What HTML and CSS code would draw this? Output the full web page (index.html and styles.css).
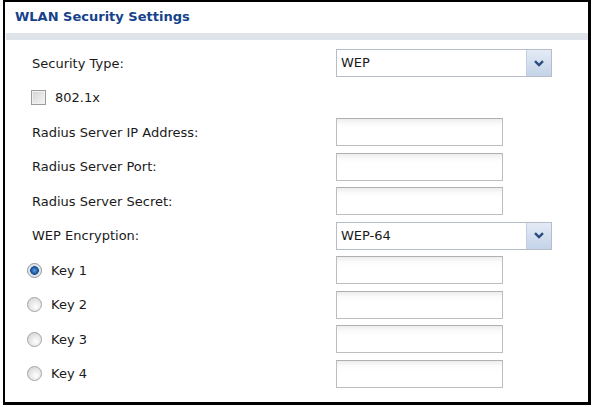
FILE: index.html
```html
<!DOCTYPE html>
<html>
<head>
<meta charset="utf-8">
<link rel="stylesheet" href="styles.css">
</head>
<body>
<div class="panel">
  <div class="panel-title">WLAN Security Settings</div>
  <div class="panel-bar"></div>
  <div class="form">
    <div class="row">
      <div class="label">Security Type:</div>
      <div class="select"><span class="select-text">WEP</span><span class="select-btn"><svg width="10" height="7" viewBox="0 0 10 7"><path d="M1 1.2 L5 5 L9 1.2" fill="none" stroke="#2a4b80" stroke-width="2.4"/></svg></span></div>
    </div>
    <div class="row">
      <span class="checkbox"></span><span class="opt-label">802.1x</span>
    </div>
    <div class="row">
      <div class="label">Radius Server IP Address:</div>
      <div class="field"></div>
    </div>
    <div class="row">
      <div class="label">Radius Server Port:</div>
      <div class="field"></div>
    </div>
    <div class="row">
      <div class="label">Radius Server Secret:</div>
      <div class="field"></div>
    </div>
    <div class="row">
      <div class="label">WEP Encryption:</div>
      <div class="select"><span class="select-text">WEP-64</span><span class="select-btn"><svg width="10" height="7" viewBox="0 0 10 7"><path d="M1 1.2 L5 5 L9 1.2" fill="none" stroke="#2a4b80" stroke-width="2.4"/></svg></span></div>
    </div>
    <div class="row">
      <div class="label radio-label"><span class="radio checked"></span><span class="opt-label">Key 1</span></div>
      <div class="field"></div>
    </div>
    <div class="row">
      <div class="label radio-label"><span class="radio"></span><span class="opt-label">Key 2</span></div>
      <div class="field"></div>
    </div>
    <div class="row">
      <div class="label radio-label"><span class="radio"></span><span class="opt-label">Key 3</span></div>
      <div class="field"></div>
    </div>
    <div class="row">
      <div class="label radio-label"><span class="radio"></span><span class="opt-label">Key 4</span></div>
      <div class="field"></div>
    </div>
  </div>
</div>
</body>
</html>
```

FILE: styles.css
```css
html, body {
  margin: 0;
  padding: 0;
  background: #fff;
}
body {
  font-family: "DejaVu Sans", Verdana, sans-serif;
  font-size: 13px;
  color: #1a1a1a;
}
.panel {
  box-sizing: border-box;
  margin-left: 3px;
  width: 588px;
  height: 405px;
  border-style: solid;
  border-color: #000;
  border-width: 2px 3px 3px 2px;
  background: #fff;
}
.panel-title {
  height: 31px;
  line-height: 30px;
  padding-left: 10px;
  font-weight: bold;
  color: #15428b;
  font-size: 13px;
}
.panel-bar {
  height: 7px;
  margin-left: 1px;
  background: #dfe4eb;
}
.form {
  padding: 9px 0 0 27px;
  display: flex;
  flex-direction: column;
  gap: 6.56px;
}
.row {
  height: 28px;
  display: flex;
  align-items: center;
}
.label {
  width: 304px;
  flex: none;
}
.radio-label {
  display: flex;
  align-items: center;
  margin-left: -5px;
  width: 309px;
}
.opt-label {
  margin-left: 9px;
}
.select {
  box-sizing: border-box;
  width: 216px;
  height: 28px;
  border: 1px solid #b7bccb;
  display: flex;
  background: #fff;
}
.select-text {
  flex: 1;
  line-height: 26px;
  padding-left: 4px;
}
.select-btn {
  width: 24px;
  border-left: 1px solid #c3cee0;
  background: linear-gradient(#e4ebf6, #c4d3e8);
  display: flex;
  align-items: center;
  justify-content: center;
}
.field {
  box-sizing: border-box;
  width: 167px;
  height: 28px;
  border: 1px solid #bdbdbd;
  border-top-color: #b0b0b0;
  background: linear-gradient(#ededed, #fbfbfb 5px, #fff 10px);
}
.checkbox {
  box-sizing: border-box;
  width: 15px;
  height: 15px;
  margin-left: -1px;
  border: 1px solid #9c9c9c;
  background: linear-gradient(135deg, #d2d2d2, #f7f7f7);
  box-shadow: inset 0 0 0 1px #f0f0f0;
}
.checkbox + .opt-label {
  margin-left: 9px;
}
.radio {
  box-sizing: border-box;
  width: 15px;
  height: 15px;
  border-radius: 50%;
  border: 1px solid #a4a4a4;
  background: radial-gradient(circle at 60% 65%, #ffffff, #dcdcdc 70%, #cfcfcf);
}
.radio.checked {
  border-color: #8c93a2;
  background: radial-gradient(circle at 50% 50%, #5c9ce0 0, #1f5fa8 3px, #17467e 4px, #d7dce4 4.6px, #f2f2f2 7px);
}
```
